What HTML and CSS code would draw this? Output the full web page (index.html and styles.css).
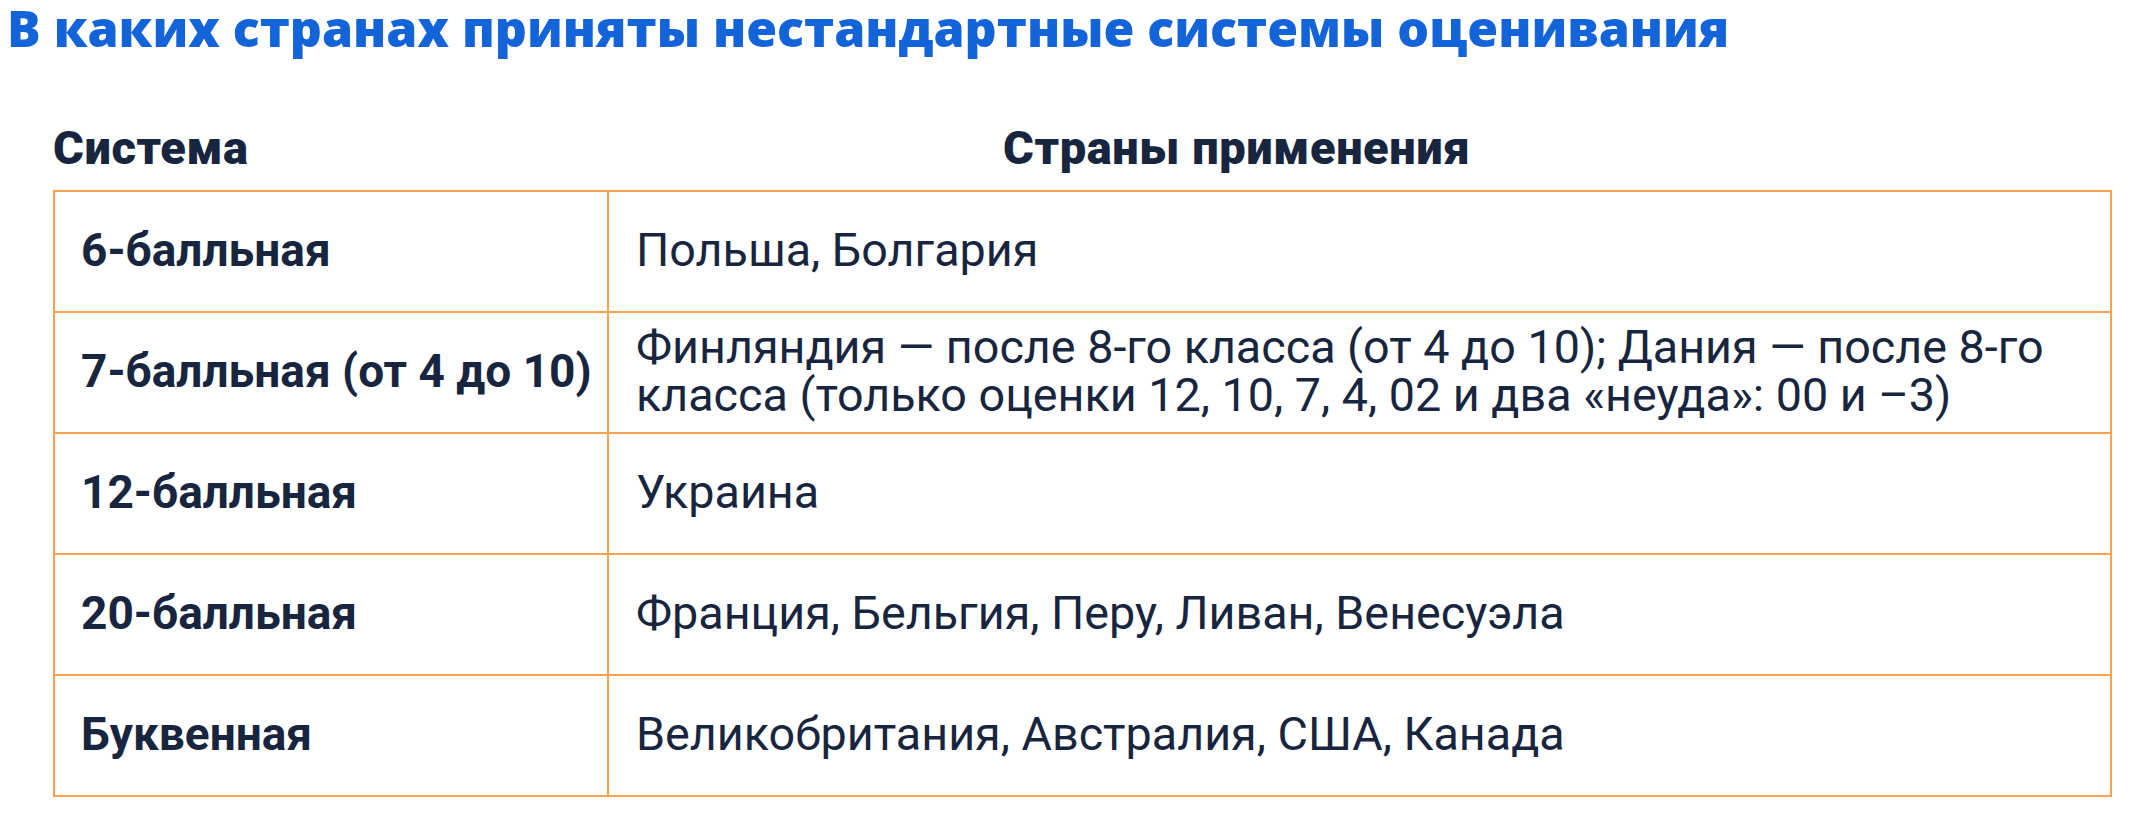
FILE: index.html
```html
<!DOCTYPE html>
<html lang="ru">
<head>
<meta charset="utf-8">
<title>Системы оценивания</title>
<link rel="stylesheet" href="styles.css">
</head>
<body>
<h1 class="title">В каких странах приняты нестандартные системы оценивания</h1>
<div class="head">
  <div class="head-system">Система</div>
  <div class="head-countries">Страны применения</div>
</div>
<table class="grades">
  <colgroup><col class="col-system"><col class="col-countries"></colgroup>
  <tbody>
    <tr><td class="system">6-балльная</td><td class="countries">Польша, Болгария</td></tr>
    <tr><td class="system">7-балльная (от 4 до 10)</td><td class="countries">Финляндия — после 8-го класса (от 4 до 10); Дания — после 8-го<br>класса (только оценки 12, 10, 7, 4, 02 и два «неуда»: 00 и –3)</td></tr>
    <tr><td class="system">12-балльная</td><td class="countries">Украина</td></tr>
    <tr><td class="system">20-балльная</td><td class="countries">Франция, Бельгия, Перу, Ливан, Венесуэла</td></tr>
    <tr><td class="system">Буквенная</td><td class="countries">Великобритания, Австралия, США, Канада</td></tr>
  </tbody>
</table>
</body>
</html>
```
FILE: styles.css
```css
html, body {
  margin: 0;
  padding: 0;
  background: #ffffff;
}
body {
  font-family: Roboto, "Noto Sans", sans-serif;
  color: #18253f;
}
.title {
  margin: 0 0 0 7px;
  font-family: "Open Sans", Roboto, sans-serif;
  font-size: 50px;
  line-height: 57px;
  font-weight: 800;
  color: #1464d9;
  white-space: nowrap;
}
.head {
  display: flex;
  margin: 64px 0 0 53px;
  font-size: 47px;
  line-height: 54px;
  font-weight: 900;
  letter-spacing: 0.6px;
  height: 54px;
}
.head-system {
  width: 950px;
}
.grades {
  margin: 15px 0 0 53px;
  width: 2059px;
  border-collapse: collapse;
  table-layout: fixed;
}
.col-system { width: 554px; }
.grades td {
  border: 2px solid #faa24d;
  height: 121px;
  padding: 0 0 4px 26px;
  vertical-align: middle;
  font-size: 47px;
  line-height: 48px;
  box-sizing: border-box;
}
.grades td.system {
  font-weight: 700;
  font-size: 46px;
}
.grades td.countries {
  font-weight: 400;
  font-size: 46.7px;
  padding-left: 27px;
}
```
